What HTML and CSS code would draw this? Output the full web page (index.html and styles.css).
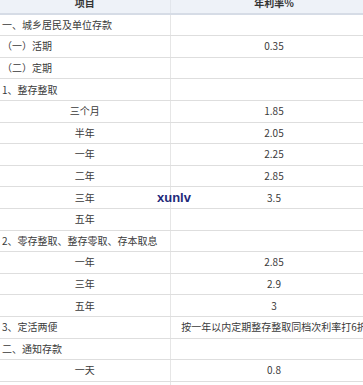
FILE: index.html
```html
<!DOCTYPE html>
<html lang="zh-CN">
<head>
<meta charset="utf-8">
<link rel="stylesheet" href="styles.css">
</head>
<body>
<div class="page">
<table class="rates">
  <colgroup><col class="c1"><col class="c2"></colgroup>
  <thead>
    <tr><th>项目</th><th>年利率%</th></tr>
  </thead>
  <tbody>
    <tr><td class="l">一、城乡居民及单位存款</td><td></td></tr>
    <tr><td class="l">（一）活期</td><td>0.35</td></tr>
    <tr><td class="l">（二）定期</td><td></td></tr>
    <tr><td class="l">1、整存整取</td><td></td></tr>
    <tr><td>三个月</td><td>1.85</td></tr>
    <tr><td>半年</td><td>2.05</td></tr>
    <tr><td>一年</td><td>2.25</td></tr>
    <tr><td>二年</td><td>2.85</td></tr>
    <tr><td>三年</td><td>3.5</td></tr>
    <tr><td>五年</td><td></td></tr>
    <tr><td class="l">2、零存整取、整存零取、存本取息</td><td></td></tr>
    <tr><td>一年</td><td>2.85</td></tr>
    <tr><td>三年</td><td>2.9</td></tr>
    <tr><td>五年</td><td>3</td></tr>
    <tr><td class="l">3、定活两便</td><td class="nw">按一年以内定期整存整取同档次利率打6折</td></tr>
    <tr><td class="l">二、通知存款</td><td></td></tr>
    <tr><td>一天</td><td>0.8</td></tr>
    <tr><td>七天</td><td>1.35</td></tr>
  </tbody>
</table>
<span class="mark">xunlv</span>
</div>
</body>
</html>
```
FILE: styles.css
```css
html, body {
  margin: 0;
  padding: 0;
  background: #fff;
  overflow: hidden;
}
.page {
  position: relative;
  width: 363px;
  height: 385px;
  overflow: hidden;
}
.rates {
  border-collapse: collapse;
  table-layout: fixed;
  width: 378px;
  margin-top: -7px;
  font-family: "Noto Sans CJK SC", "Noto Sans", sans-serif;
  font-size: 10px;
  color: #3a3a3a;
}
.c1 { width: 170px; }
.c2 { width: 208px; }
.rates th {
  height: 19.6px;
  padding: 0;
  background: #eef2f8;
  font-weight: bold;
  color: #333;
  text-align: center;
  border-bottom: 2px solid #d6dce6;
  border-right: 1px solid #e2e6ec;
}
.rates td {
  height: 20.6px;
  padding: 0;
  text-align: center;
  border-bottom: 1px solid #dedede;
  border-right: 1px solid #e6e6e6;
  white-space: nowrap;
  overflow: visible;
  line-height: 1;
}
.rates td.l {
  text-align: left;
  padding-left: 2px;
}
.mark {
  position: absolute;
  left: 157px;
  top: 190px;
  font-family: "Liberation Sans", Arial, sans-serif;
  font-weight: bold;
  font-size: 13px;
  color: #1f2a7a;
}
```
